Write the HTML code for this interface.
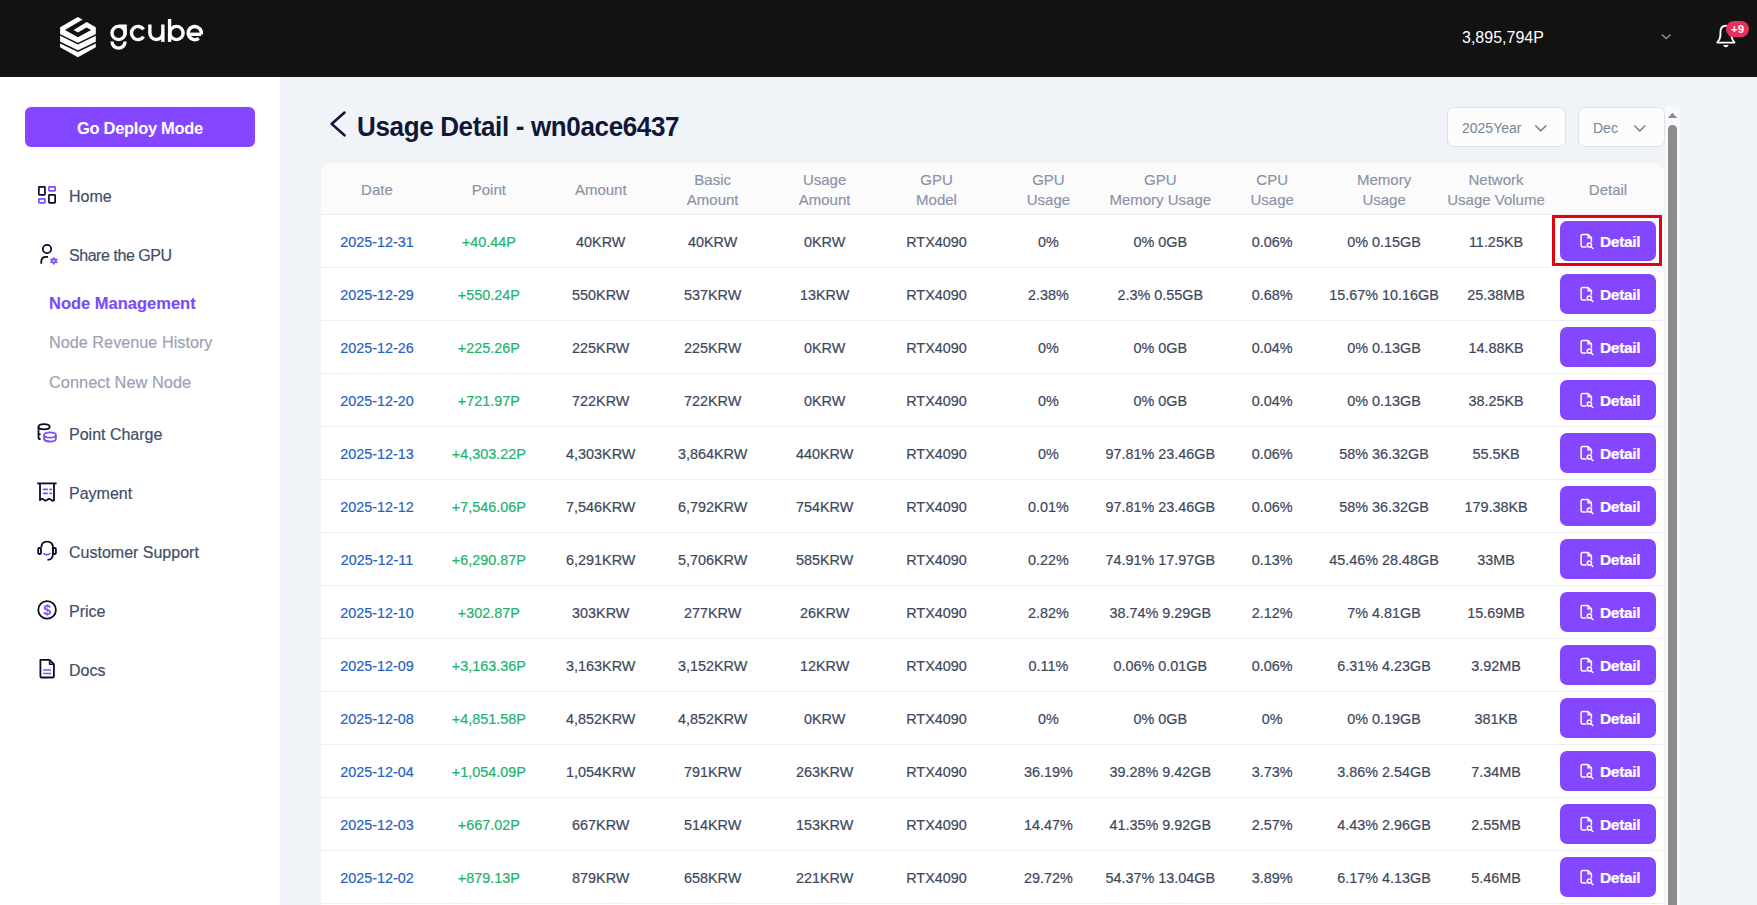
<!DOCTYPE html>
<html><head><meta charset="utf-8">
<style>
*{box-sizing:border-box}
html,body{margin:0;padding:0}
body{width:1757px;height:905px;overflow:hidden;position:relative;background:#f0f3f8;font-family:"Liberation Sans",sans-serif}
.hdr{position:absolute;left:0;top:0;width:1757px;height:77px;background:#121212}
.side{position:absolute;left:0;top:77px;width:280px;height:828px;background:#fff}
.abs{position:absolute;white-space:nowrap}
.deploy{position:absolute;left:25px;top:107px;width:230px;height:40px;background:#8447ff;border-radius:6px;color:#fff;font-weight:700;font-size:16.5px;text-align:center;line-height:42px;letter-spacing:-0.3px}
.nav{-webkit-text-stroke:0.2px currentColor;position:absolute;left:69px;font-size:16px;color:#434f66;white-space:nowrap;line-height:20px}
.sub{-webkit-text-stroke:0.15px currentColor;position:absolute;left:49px;font-size:16px;color:#9aa1b3;white-space:nowrap;line-height:20px}
.ico{position:absolute;left:0;top:0;overflow:visible}
.title{transform:scale(1,1.055);transform-origin:0 27px;position:absolute;left:357px;top:109px;font-size:26px;font-weight:700;color:#0e1836;letter-spacing:-0.35px;line-height:36px;white-space:nowrap}
.sel{position:absolute;top:107px;height:40px;border:1px solid #dde1e8;border-radius:7px;background:#fcfcfd;color:#7a8397;font-size:14px;line-height:38px}
.sel span{position:absolute;left:14px;top:0.5px}
.scroll{position:absolute;left:1665px;top:107px;width:15px;height:798px;background:#f8f9fb}
.thumb{position:absolute;left:1668px;top:125px;width:9px;height:800px;background:#8c8c8c;border-radius:5px}
.tb{position:absolute;left:321px;top:163px;width:1343px;border-collapse:separate;border-spacing:0;table-layout:fixed;background:#fff;border-radius:10px 10px 0 0;overflow:hidden}
.tb th{-webkit-text-stroke:0.15px currentColor;height:52px;background:#fbfbfc;color:#8a92a5;font-weight:400;font-size:15px;line-height:20px;text-align:center;padding:2px 0 0 0;border-bottom:1px solid #eceef2;white-space:nowrap}
.tb th:first-child{border-top-left-radius:10px}
.tb th:last-child{border-top-right-radius:10px}
.tb td{-webkit-text-stroke:0.2px currentColor;height:53px;color:#3d485c;font-size:14.4px;text-align:center;padding:1px 0 0 0;border-bottom:1px solid #eceef2;white-space:nowrap;position:relative}
.tb td.dt{color:#2862c0}
.tb td.pt{color:#22b26e}
.btn{position:absolute;left:8px;top:6px;width:96px;height:40px;background:#8447ff;border-radius:7px;color:#fff}
.btn b{position:absolute;left:40px;top:1px;line-height:40px;font-size:15.5px;letter-spacing:-0.3px}
.di{position:absolute;left:19px;top:12px}
.hl{position:absolute;left:0px;top:0;width:110px;height:51px;border:3px solid #e3000f}
</style></head><body>
<div class="hdr">
 <svg class="ico" width="220" height="77" viewBox="0 0 220 77">
  <polygon points="77.9,17.1 95.8,27.3 95.8,47.3 77.9,57.3 60.1,47.3 60.1,27.3" fill="#fff"/>
  <polygon points="81.6,18.9 83.2,19.2 64.9,29.9 77.9,37.2 91.2,29.9 86.5,27.5 77.9,32.5 73.6,30.0 87.6,21.4 88.5,21.9" fill="#121212"/>
  <polyline points="59,34.4 77.9,43.7 97,34.4" fill="none" stroke="#121212" stroke-width="1.6"/>
  <polyline points="59,42.0 77.9,51.1 97,42.0" fill="none" stroke="#121212" stroke-width="1.6"/>
  <g fill="none" stroke="#fff" stroke-width="3.4">
   <circle cx="118.55" cy="33" r="6.6"/>
   <path d="M118.55 26.25H125.1V35"/>
   <path d="M112 41.6A6.55 6.55 0 0 0 125.1 41.6"/>
   <path d="M143.6 29.4A6.6 6.6 0 1 0 143.6 36.6"/>
   <path d="M149.85 24.5V33A6.5 6.5 0 0 0 162.85 33"/>
   <path d="M162.85 24.5V41.9"/>
   <path d="M169.6 19V41.9"/>
   <circle cx="176.5" cy="33" r="6.6"/>
   <path d="M188.4 34.3H201.3"/>
   <path d="M201.3 34.2A6.6 6.6 0 1 0 198.8 38.3"/>
  </g>
 </svg>
 <div class="abs" style="left:1462px;top:28px;font-size:16px;line-height:20px;color:#fff">3,895,794P</div>
 <svg class="ico" width="1757" height="77" viewBox="0 0 1757 77">
  <path d="M1661.8 34.5L1666.2 38.6L1670.6 34.5" fill="none" stroke="#8a93a6" stroke-width="1.3"/>
  <path d="M1717.3 42.6H1734.5Q1731.4 39 1731.4 35.5V32.5Q1731.4 25.8 1725.9 25.8Q1720.4 25.8 1720.4 32.5V35.5Q1720.4 39 1717.3 42.6Z" fill="none" stroke="#fff" stroke-width="1.9" stroke-linejoin="round"/>
  <path d="M1723.6 45.6Q1725.9 48.4 1728.2 45.6Z" fill="#fff" stroke="#fff" stroke-width="1"/>
  <rect x="1726" y="21" width="23" height="16.3" rx="8.1" fill="#e8305c"/>
  <text x="1737.5" y="33.4" text-anchor="middle" font-family="Liberation Sans" font-weight="700" font-size="11.5" fill="#fff">+9</text>
 </svg>
</div>
<div class="side">
 <div class="deploy" style="top:30px">Go Deploy Mode</div>
</div>
<div class="nav" style="top:186.7px">Home</div>
<div class="nav" style="top:245.8px;letter-spacing:-0.45px">Share the GPU</div>
<div class="sub" style="top:292.6px;color:#7b4cf6;font-weight:700;font-size:16.5px">Node Management</div>
<div class="sub" style="top:332px;font-size:16.25px">Node Revenue History</div>
<div class="sub" style="top:372.2px;font-size:16.4px">Connect New Node</div>
<div class="nav" style="top:425.2px">Point Charge</div>
<div class="nav" style="top:484.3px">Payment</div>
<div class="nav" style="top:542.8px">Customer Support</div>
<div class="nav" style="top:602px">Price</div>
<div class="nav" style="top:661px">Docs</div>
<svg class="ico" width="280" height="905" viewBox="0 0 280 905" style="position:absolute">
 <g fill="none" stroke-width="1.7" stroke-linejoin="round">
  <rect x="38.85" y="186.85" width="6.1" height="8.1" rx="0.6" stroke="#0b0b2a"/>
  <rect x="48.95" y="186.85" width="6.2" height="4.1" rx="0.6" stroke="#7c4dff"/>
  <rect x="38.85" y="198.95" width="6.1" height="4.0" rx="0.6" stroke="#7c4dff"/>
  <rect x="48.95" y="194.95" width="6.2" height="8.0" rx="0.6" stroke="#0b0b2a"/>
  <circle cx="47" cy="249" r="4.2" stroke="#0b0b2a" stroke-width="1.8"/>
  <path d="M41.3 263.7V261.5Q41.3 256.8 46 256.8H48" stroke="#0b0b2a" stroke-width="1.8" stroke-linecap="butt"/>
 </g>
 <g fill="#7c4dff">
  <path d="M53.9 257.2L55.2 259.1H57.5L56.3 260.9L57.5 262.7H55.2L53.9 264.6L52.6 262.7H50.3L51.5 260.9L50.3 259.1H52.6Z" stroke="#7c4dff" stroke-width="0.7" stroke-linejoin="round"/>
  <circle cx="53.9" cy="260.9" r="0.9" fill="#f3ecff"/>
 </g>
 <g fill="none" stroke="#0b0b2a" stroke-width="1.8">
  <ellipse cx="44.1" cy="426.7" rx="5.6" ry="2.6"/>
  <path d="M38.5 426.7V437.4Q38.5 439.1 40.6 439.1"/>
  <path d="M38.5 434.2H40.6"/>
 </g>
 <g fill="none" stroke="#7c4dff" stroke-width="1.8">
  <ellipse cx="50" cy="435" rx="5.9" ry="2.7"/>
  <path d="M44.1 435V438.8Q44.1 441.6 50 441.6Q55.9 441.6 55.9 438.8V435"/>
  <path d="M44.1 438.6Q44.1 441.4 50 441.4"/>
 </g>
 <g fill="none" stroke="#0b0b2a" stroke-width="1.8" stroke-linejoin="round">
  <path d="M37.2 483.4H56.6"/>
  <path d="M40 483.4V500.3Q41.8 498 43.7 499.6Q45.5 501.4 47.2 499.8Q49 498 50.8 499.6Q52.4 501.4 54 500.3V483.4"/>
  <path d="M41.4 547.5Q41.4 541.6 47 541.6Q52.9 541.6 52.9 547.5V553.5Q52.9 559.9 47.5 559.9"/>
  <rect x="38.2" y="548" width="2.8" height="6" rx="0.9"/>
  <rect x="53.1" y="548" width="2.8" height="6" rx="0.9"/>
  <circle cx="47.1" cy="609.9" r="8.8"/>
  <path d="M40.4 659.9H49.6L53.9 664.2V676.6Q53.9 677.5 53 677.5H41.3Q40.4 677.5 40.4 676.6Z"/>
  <path d="M49.6 659.9V664.2H53.9" stroke-width="1.6"/>
 </g>
 <g fill="none" stroke="#7c4dff" stroke-width="1.8" stroke-linecap="round">
  <path d="M43.6 489.4H47.2M50 489.4H51.2M43.6 493.3H47.2M50 493.3H51.2"/>
  <path d="M44 553.6Q46.9 555.8 49.8 553.6"/>
  <path d="M43.3 670H51M43.3 673.6H51" stroke-linecap="butt" stroke-width="1.5"/>
 </g>
 <text x="47.2" y="615.2" text-anchor="middle" font-family="Liberation Sans" font-weight="700" font-size="14" fill="#7c4dff">$</text>
</svg>

<div class="title">Usage Detail - wn0ace6437</div>
<svg class="ico" width="1757" height="905" viewBox="0 0 1757 905" style="position:absolute">
 <path d="M344.5 112.6L331.6 123.9L344.5 135.3" fill="none" stroke="#0e1836" stroke-width="2.6" stroke-linecap="round" stroke-linejoin="round"/>
</svg>
<div class="sel" style="left:1447px;width:119px"><span>2025Year</span><svg class="ico" style="left:86px;top:15.5px" width="14" height="9" viewBox="0 0 14 9"><path d="M1.3 1.5L6.8 6.8L12.3 1.5" fill="none" stroke="#7a8397" stroke-width="1.6"/></svg></div>
<div class="sel" style="left:1578px;width:87px"><span>Dec</span><svg class="ico" style="left:54px;top:15.5px" width="14" height="9" viewBox="0 0 14 9"><path d="M1.3 1.5L6.8 6.8L12.3 1.5" fill="none" stroke="#7a8397" stroke-width="1.6"/></svg></div>
<table class="tb"><colgroup><col style="width:111.9px"><col style="width:111.9px"><col style="width:111.9px"><col style="width:111.9px"><col style="width:111.9px"><col style="width:111.9px"><col style="width:111.9px"><col style="width:111.9px"><col style="width:111.9px"><col style="width:111.9px"><col style="width:111.9px"><col style="width:111.9px"></colgroup><thead><tr><th>Date</th><th>Point</th><th>Amount</th><th>Basic<br>Amount</th><th>Usage<br>Amount</th><th>GPU<br>Model</th><th>GPU<br>Usage</th><th>GPU<br>Memory Usage</th><th>CPU<br>Usage</th><th>Memory<br>Usage</th><th>Network<br>Usage Volume</th><th>Detail</th></tr></thead><tbody>
<tr><td class="dt">2025-12-31</td><td class="pt">+40.44P</td><td>40KRW</td><td>40KRW</td><td>0KRW</td><td>RTX4090</td><td>0%</td><td>0% 0GB</td><td>0.06%</td><td>0% 0.15GB</td><td>11.25KB</td><td class="bc"><span class="btn"><svg class="di" width="16" height="17" viewBox="1579 233 16 17"><path d="M1586 247.1H1582.6Q1581.1 247.1 1581.1 245.6V236Q1581.1 234.5 1582.6 234.5H1588L1591.4 237.9V241.7" fill="none" stroke="#fff" stroke-width="1.5" stroke-linejoin="round" stroke-linecap="round"/><path d="M1588 234.6V237.9H1591.3" fill="none" stroke="#fff" stroke-width="1.3"/><circle cx="1589.4" cy="245" r="2.1" fill="none" stroke="#fff" stroke-width="1.5"/><path d="M1591 246.7L1592.9 248.5" stroke="#fff" stroke-width="1.5" stroke-linecap="round"/></svg><b>Detail</b></span><span class="hl"></span></td></tr>
<tr><td class="dt">2025-12-29</td><td class="pt">+550.24P</td><td>550KRW</td><td>537KRW</td><td>13KRW</td><td>RTX4090</td><td>2.38%</td><td>2.3% 0.55GB</td><td>0.68%</td><td>15.67% 10.16GB</td><td>25.38MB</td><td class="bc"><span class="btn"><svg class="di" width="16" height="17" viewBox="1579 233 16 17"><path d="M1586 247.1H1582.6Q1581.1 247.1 1581.1 245.6V236Q1581.1 234.5 1582.6 234.5H1588L1591.4 237.9V241.7" fill="none" stroke="#fff" stroke-width="1.5" stroke-linejoin="round" stroke-linecap="round"/><path d="M1588 234.6V237.9H1591.3" fill="none" stroke="#fff" stroke-width="1.3"/><circle cx="1589.4" cy="245" r="2.1" fill="none" stroke="#fff" stroke-width="1.5"/><path d="M1591 246.7L1592.9 248.5" stroke="#fff" stroke-width="1.5" stroke-linecap="round"/></svg><b>Detail</b></span></td></tr>
<tr><td class="dt">2025-12-26</td><td class="pt">+225.26P</td><td>225KRW</td><td>225KRW</td><td>0KRW</td><td>RTX4090</td><td>0%</td><td>0% 0GB</td><td>0.04%</td><td>0% 0.13GB</td><td>14.88KB</td><td class="bc"><span class="btn"><svg class="di" width="16" height="17" viewBox="1579 233 16 17"><path d="M1586 247.1H1582.6Q1581.1 247.1 1581.1 245.6V236Q1581.1 234.5 1582.6 234.5H1588L1591.4 237.9V241.7" fill="none" stroke="#fff" stroke-width="1.5" stroke-linejoin="round" stroke-linecap="round"/><path d="M1588 234.6V237.9H1591.3" fill="none" stroke="#fff" stroke-width="1.3"/><circle cx="1589.4" cy="245" r="2.1" fill="none" stroke="#fff" stroke-width="1.5"/><path d="M1591 246.7L1592.9 248.5" stroke="#fff" stroke-width="1.5" stroke-linecap="round"/></svg><b>Detail</b></span></td></tr>
<tr><td class="dt">2025-12-20</td><td class="pt">+721.97P</td><td>722KRW</td><td>722KRW</td><td>0KRW</td><td>RTX4090</td><td>0%</td><td>0% 0GB</td><td>0.04%</td><td>0% 0.13GB</td><td>38.25KB</td><td class="bc"><span class="btn"><svg class="di" width="16" height="17" viewBox="1579 233 16 17"><path d="M1586 247.1H1582.6Q1581.1 247.1 1581.1 245.6V236Q1581.1 234.5 1582.6 234.5H1588L1591.4 237.9V241.7" fill="none" stroke="#fff" stroke-width="1.5" stroke-linejoin="round" stroke-linecap="round"/><path d="M1588 234.6V237.9H1591.3" fill="none" stroke="#fff" stroke-width="1.3"/><circle cx="1589.4" cy="245" r="2.1" fill="none" stroke="#fff" stroke-width="1.5"/><path d="M1591 246.7L1592.9 248.5" stroke="#fff" stroke-width="1.5" stroke-linecap="round"/></svg><b>Detail</b></span></td></tr>
<tr><td class="dt">2025-12-13</td><td class="pt">+4,303.22P</td><td>4,303KRW</td><td>3,864KRW</td><td>440KRW</td><td>RTX4090</td><td>0%</td><td>97.81% 23.46GB</td><td>0.06%</td><td>58% 36.32GB</td><td>55.5KB</td><td class="bc"><span class="btn"><svg class="di" width="16" height="17" viewBox="1579 233 16 17"><path d="M1586 247.1H1582.6Q1581.1 247.1 1581.1 245.6V236Q1581.1 234.5 1582.6 234.5H1588L1591.4 237.9V241.7" fill="none" stroke="#fff" stroke-width="1.5" stroke-linejoin="round" stroke-linecap="round"/><path d="M1588 234.6V237.9H1591.3" fill="none" stroke="#fff" stroke-width="1.3"/><circle cx="1589.4" cy="245" r="2.1" fill="none" stroke="#fff" stroke-width="1.5"/><path d="M1591 246.7L1592.9 248.5" stroke="#fff" stroke-width="1.5" stroke-linecap="round"/></svg><b>Detail</b></span></td></tr>
<tr><td class="dt">2025-12-12</td><td class="pt">+7,546.06P</td><td>7,546KRW</td><td>6,792KRW</td><td>754KRW</td><td>RTX4090</td><td>0.01%</td><td>97.81% 23.46GB</td><td>0.06%</td><td>58% 36.32GB</td><td>179.38KB</td><td class="bc"><span class="btn"><svg class="di" width="16" height="17" viewBox="1579 233 16 17"><path d="M1586 247.1H1582.6Q1581.1 247.1 1581.1 245.6V236Q1581.1 234.5 1582.6 234.5H1588L1591.4 237.9V241.7" fill="none" stroke="#fff" stroke-width="1.5" stroke-linejoin="round" stroke-linecap="round"/><path d="M1588 234.6V237.9H1591.3" fill="none" stroke="#fff" stroke-width="1.3"/><circle cx="1589.4" cy="245" r="2.1" fill="none" stroke="#fff" stroke-width="1.5"/><path d="M1591 246.7L1592.9 248.5" stroke="#fff" stroke-width="1.5" stroke-linecap="round"/></svg><b>Detail</b></span></td></tr>
<tr><td class="dt">2025-12-11</td><td class="pt">+6,290.87P</td><td>6,291KRW</td><td>5,706KRW</td><td>585KRW</td><td>RTX4090</td><td>0.22%</td><td>74.91% 17.97GB</td><td>0.13%</td><td>45.46% 28.48GB</td><td>33MB</td><td class="bc"><span class="btn"><svg class="di" width="16" height="17" viewBox="1579 233 16 17"><path d="M1586 247.1H1582.6Q1581.1 247.1 1581.1 245.6V236Q1581.1 234.5 1582.6 234.5H1588L1591.4 237.9V241.7" fill="none" stroke="#fff" stroke-width="1.5" stroke-linejoin="round" stroke-linecap="round"/><path d="M1588 234.6V237.9H1591.3" fill="none" stroke="#fff" stroke-width="1.3"/><circle cx="1589.4" cy="245" r="2.1" fill="none" stroke="#fff" stroke-width="1.5"/><path d="M1591 246.7L1592.9 248.5" stroke="#fff" stroke-width="1.5" stroke-linecap="round"/></svg><b>Detail</b></span></td></tr>
<tr><td class="dt">2025-12-10</td><td class="pt">+302.87P</td><td>303KRW</td><td>277KRW</td><td>26KRW</td><td>RTX4090</td><td>2.82%</td><td>38.74% 9.29GB</td><td>2.12%</td><td>7% 4.81GB</td><td>15.69MB</td><td class="bc"><span class="btn"><svg class="di" width="16" height="17" viewBox="1579 233 16 17"><path d="M1586 247.1H1582.6Q1581.1 247.1 1581.1 245.6V236Q1581.1 234.5 1582.6 234.5H1588L1591.4 237.9V241.7" fill="none" stroke="#fff" stroke-width="1.5" stroke-linejoin="round" stroke-linecap="round"/><path d="M1588 234.6V237.9H1591.3" fill="none" stroke="#fff" stroke-width="1.3"/><circle cx="1589.4" cy="245" r="2.1" fill="none" stroke="#fff" stroke-width="1.5"/><path d="M1591 246.7L1592.9 248.5" stroke="#fff" stroke-width="1.5" stroke-linecap="round"/></svg><b>Detail</b></span></td></tr>
<tr><td class="dt">2025-12-09</td><td class="pt">+3,163.36P</td><td>3,163KRW</td><td>3,152KRW</td><td>12KRW</td><td>RTX4090</td><td>0.11%</td><td>0.06% 0.01GB</td><td>0.06%</td><td>6.31% 4.23GB</td><td>3.92MB</td><td class="bc"><span class="btn"><svg class="di" width="16" height="17" viewBox="1579 233 16 17"><path d="M1586 247.1H1582.6Q1581.1 247.1 1581.1 245.6V236Q1581.1 234.5 1582.6 234.5H1588L1591.4 237.9V241.7" fill="none" stroke="#fff" stroke-width="1.5" stroke-linejoin="round" stroke-linecap="round"/><path d="M1588 234.6V237.9H1591.3" fill="none" stroke="#fff" stroke-width="1.3"/><circle cx="1589.4" cy="245" r="2.1" fill="none" stroke="#fff" stroke-width="1.5"/><path d="M1591 246.7L1592.9 248.5" stroke="#fff" stroke-width="1.5" stroke-linecap="round"/></svg><b>Detail</b></span></td></tr>
<tr><td class="dt">2025-12-08</td><td class="pt">+4,851.58P</td><td>4,852KRW</td><td>4,852KRW</td><td>0KRW</td><td>RTX4090</td><td>0%</td><td>0% 0GB</td><td>0%</td><td>0% 0.19GB</td><td>381KB</td><td class="bc"><span class="btn"><svg class="di" width="16" height="17" viewBox="1579 233 16 17"><path d="M1586 247.1H1582.6Q1581.1 247.1 1581.1 245.6V236Q1581.1 234.5 1582.6 234.5H1588L1591.4 237.9V241.7" fill="none" stroke="#fff" stroke-width="1.5" stroke-linejoin="round" stroke-linecap="round"/><path d="M1588 234.6V237.9H1591.3" fill="none" stroke="#fff" stroke-width="1.3"/><circle cx="1589.4" cy="245" r="2.1" fill="none" stroke="#fff" stroke-width="1.5"/><path d="M1591 246.7L1592.9 248.5" stroke="#fff" stroke-width="1.5" stroke-linecap="round"/></svg><b>Detail</b></span></td></tr>
<tr><td class="dt">2025-12-04</td><td class="pt">+1,054.09P</td><td>1,054KRW</td><td>791KRW</td><td>263KRW</td><td>RTX4090</td><td>36.19%</td><td>39.28% 9.42GB</td><td>3.73%</td><td>3.86% 2.54GB</td><td>7.34MB</td><td class="bc"><span class="btn"><svg class="di" width="16" height="17" viewBox="1579 233 16 17"><path d="M1586 247.1H1582.6Q1581.1 247.1 1581.1 245.6V236Q1581.1 234.5 1582.6 234.5H1588L1591.4 237.9V241.7" fill="none" stroke="#fff" stroke-width="1.5" stroke-linejoin="round" stroke-linecap="round"/><path d="M1588 234.6V237.9H1591.3" fill="none" stroke="#fff" stroke-width="1.3"/><circle cx="1589.4" cy="245" r="2.1" fill="none" stroke="#fff" stroke-width="1.5"/><path d="M1591 246.7L1592.9 248.5" stroke="#fff" stroke-width="1.5" stroke-linecap="round"/></svg><b>Detail</b></span></td></tr>
<tr><td class="dt">2025-12-03</td><td class="pt">+667.02P</td><td>667KRW</td><td>514KRW</td><td>153KRW</td><td>RTX4090</td><td>14.47%</td><td>41.35% 9.92GB</td><td>2.57%</td><td>4.43% 2.96GB</td><td>2.55MB</td><td class="bc"><span class="btn"><svg class="di" width="16" height="17" viewBox="1579 233 16 17"><path d="M1586 247.1H1582.6Q1581.1 247.1 1581.1 245.6V236Q1581.1 234.5 1582.6 234.5H1588L1591.4 237.9V241.7" fill="none" stroke="#fff" stroke-width="1.5" stroke-linejoin="round" stroke-linecap="round"/><path d="M1588 234.6V237.9H1591.3" fill="none" stroke="#fff" stroke-width="1.3"/><circle cx="1589.4" cy="245" r="2.1" fill="none" stroke="#fff" stroke-width="1.5"/><path d="M1591 246.7L1592.9 248.5" stroke="#fff" stroke-width="1.5" stroke-linecap="round"/></svg><b>Detail</b></span></td></tr>
<tr><td class="dt">2025-12-02</td><td class="pt">+879.13P</td><td>879KRW</td><td>658KRW</td><td>221KRW</td><td>RTX4090</td><td>29.72%</td><td>54.37% 13.04GB</td><td>3.89%</td><td>6.17% 4.13GB</td><td>5.46MB</td><td class="bc"><span class="btn"><svg class="di" width="16" height="17" viewBox="1579 233 16 17"><path d="M1586 247.1H1582.6Q1581.1 247.1 1581.1 245.6V236Q1581.1 234.5 1582.6 234.5H1588L1591.4 237.9V241.7" fill="none" stroke="#fff" stroke-width="1.5" stroke-linejoin="round" stroke-linecap="round"/><path d="M1588 234.6V237.9H1591.3" fill="none" stroke="#fff" stroke-width="1.3"/><circle cx="1589.4" cy="245" r="2.1" fill="none" stroke="#fff" stroke-width="1.5"/><path d="M1591 246.7L1592.9 248.5" stroke="#fff" stroke-width="1.5" stroke-linecap="round"/></svg><b>Detail</b></span></td></tr>
<tr><td class="dt">2025-12-01</td><td class="pt">+500.00P</td><td>500KRW</td><td>500KRW</td><td>0KRW</td><td>RTX4090</td><td>0%</td><td>0% 0GB</td><td>0.04%</td><td>0% 0.13GB</td><td>10.00KB</td><td class="bc"><span class="btn"><svg class="di" width="16" height="17" viewBox="1579 233 16 17"><path d="M1586 247.1H1582.6Q1581.1 247.1 1581.1 245.6V236Q1581.1 234.5 1582.6 234.5H1588L1591.4 237.9V241.7" fill="none" stroke="#fff" stroke-width="1.5" stroke-linejoin="round" stroke-linecap="round"/><path d="M1588 234.6V237.9H1591.3" fill="none" stroke="#fff" stroke-width="1.3"/><circle cx="1589.4" cy="245" r="2.1" fill="none" stroke="#fff" stroke-width="1.5"/><path d="M1591 246.7L1592.9 248.5" stroke="#fff" stroke-width="1.5" stroke-linecap="round"/></svg><b>Detail</b></span></td></tr>
</tbody></table>
<div class="scroll"></div>
<svg class="ico" width="1757" height="905" viewBox="0 0 1757 905" style="position:absolute"><path d="M1667.8 118H1677.2L1672.5 112.8Z" fill="#8c8c8c"/></svg>
<div class="thumb"></div>
</body></html>
